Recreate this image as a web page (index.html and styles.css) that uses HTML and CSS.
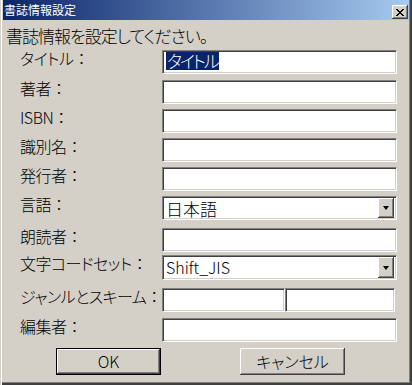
FILE: index.html
```html
<!DOCTYPE html>
<html lang="ja">
<head>
<meta charset="utf-8">
<title>書誌情報設定</title>
<link rel="stylesheet" href="styles.css">
</head>
<body>
<div class="window">
  <div class="titlebar">
    <span class="title">書誌情報設定</span>
    <span class="close"><svg width="8" height="7" viewBox="0 0 8 7" shape-rendering="crispEdges"><path d="M0 0h2v1h1v1h2v-1h1v-1h2v1h-1v1h-1v1h-1v1h1v1h1v1h1v1h-2v-1h-1v-1h-2v1h-1v1h-2v-1h1v-1h1v-1h1v-1h-1v-1h-1v-1h-1z" fill="#000"/></svg></span>
  </div>
  <div class="content">
    <p class="prompt">書誌情報を設定してください。</p>
    <div class="form">
      <div class="row"><span class="label">タイトル<span class="colon">：</span></span><div class="field"><span class="selected">タイトル</span></div></div>
      <div class="row gap6"><span class="label">著者<span class="colon">：</span></span><div class="field"></div></div>
      <div class="row"><span class="label">ISBN<span class="colon">：</span></span><div class="field"></div></div>
      <div class="row"><span class="label">識別名<span class="colon">：</span></span><div class="field"></div></div>
      <div class="row"><span class="label">発行者<span class="colon">：</span></span><div class="field"></div></div>
      <div class="row"><span class="label">言語<span class="colon">：</span></span><div class="field select"><span class="value">日本語</span><span class="dd"><i class="arrow"></i></span></div></div>
      <div class="row gap8"><span class="label">朗読者<span class="colon">：</span></span><div class="field"></div></div>
      <div class="row gap3 tall"><span class="label">文字コードセット<span class="colon">：</span></span><div class="field select"><span class="value latin">Shift_JIS</span><span class="dd"><i class="arrow"></i></span></div></div>
      <div class="row gap8"><span class="label">ジャンルとスキーム<span class="colon">：</span></span><div class="split"><div class="field genre"></div><div class="field scheme"></div></div></div>
      <div class="row gap6"><span class="label">編集者<span class="colon">：</span></span><div class="field"></div></div>
    </div>
    <div class="buttons">
      <button class="btn default">OK</button>
      <button class="btn">キャンセル</button>
    </div>
  </div>
</div>
</body>
</html>
```

FILE: styles.css
```css
* {
  box-sizing: border-box;
}

html,
body {
  margin: 0;
  padding: 0;
  background: #d4d0c8;
}

body {
  font-family: "Noto Sans CJK JP", "Noto Sans", sans-serif;
  font-weight: 300;
  color: #000;
}

.window {
  width: 412px;
  height: 385px;
  background: #d4d0c8;
  padding: 0 3px 3px 3px;
  display: flex;
  flex-direction: column;
  box-shadow:
    inset 1px 0 #d4d0c8,
    inset 2px 0 #ffffff,
    inset -2px -2px #404040,
    inset -3px -3px #808080;
}

.titlebar {
  height: 20px;
  flex: none;
  background: linear-gradient(to right, #0a246a, #a6caf0);
  display: flex;
  align-items: flex-start;
  justify-content: space-between;
  padding: 0 1px 0 1px;
}

.title {
  color: #fff;
  font-size: 12px;
  font-weight: 400;
  line-height: 20px;
  font-feature-settings: "palt";
}

.close {
  width: 16px;
  height: 14px;
  margin-top: 5px;
  background: #d4d0c8;
  display: flex;
  align-items: center;
  justify-content: center;
  box-shadow:
    inset -1px -1px #404040,
    inset 1px 1px #ffffff,
    inset -2px -2px #808080;
}

.close svg {
  display: block;
}

.content {
  flex: 1;
  display: flex;
  flex-direction: column;
  padding-left: 3px;
}

.prompt {
  margin: 4px 0 0 0;
  font-size: 17px;
  line-height: 24px;
  letter-spacing: -1px;
  font-feature-settings: "palt";
}

.form {
  margin-top: 2px;
  padding-left: 14px;
  display: flex;
  flex-direction: column;
}

.row {
  display: flex;
  align-items: flex-start;
  height: 24px;
  margin-top: 5px;
}

.row:first-child {
  margin-top: 0;
}

.row.gap6 {
  margin-top: 6px;
}

.row.gap8 {
  margin-top: 8px;
}

.row.gap3 {
  margin-top: 3px;
}

.row.tall {
  height: 25px;
}

.label {
  width: 142px;
  flex: none;
  font-size: 16px;
  line-height: 14px;
  padding-top: 1px;
  letter-spacing: -0.5px;
  white-space: nowrap;
  font-feature-settings: "palt";
}

.colon {
  font-feature-settings: normal;
  letter-spacing: 0;
}

.field {
  width: 235px;
  height: 100%;
  background: #fff;
  border: 1px solid;
  border-color: #808080 #ffffff #ffffff #808080;
  box-shadow:
    inset 1px 1px #404040,
    inset -1px -1px #d4d0c8;
  padding: 1px 1px 1px 3px;
  display: flex;
  align-items: flex-start;
  font-size: 17px;
  line-height: 20px;
  font-feature-settings: "palt";
}

.selected {
  background: #0a246a;
  color: #fff;
  line-height: 18px;
  padding: 0 1px;
  letter-spacing: -2px;
}

.select {
  padding-right: 2px;
}

.select .value {
  flex: 1;
  line-height: 21px;
}

.select .value.latin {
  font-size: 16px;
}

.dd {
  width: 16px;
  height: 100%;
  flex: none;
  background: #d4d0c8;
  display: flex;
  align-items: center;
  justify-content: center;
  box-shadow:
    inset -1px -1px #404040,
    inset 1px 1px #ffffff,
    inset -2px -2px #808080;
}

.arrow {
  width: 0;
  height: 0;
  border-left: 3.5px solid transparent;
  border-right: 3.5px solid transparent;
  border-top: 4px solid #000;
}

.split {
  display: flex;
  height: 100%;
}

.field.genre {
  width: 123px;
}

.field.scheme {
  width: 110px;
}

.buttons {
  display: flex;
  gap: 79px;
  padding-left: 50px;
  margin-top: 6px;
}

.btn {
  width: 105px;
  height: 27px;
  background: #d4d0c8;
  border: none;
  padding: 0 0 2px 0;
  font-family: "Noto Sans CJK JP", "Noto Sans", sans-serif;
  font-weight: 300;
  font-size: 16px;
  line-height: 20px;
  color: #000;
  font-feature-settings: "palt";
  box-shadow:
    inset -1px -1px #404040,
    inset 1px 1px #ffffff,
    inset -2px -2px #808080;
}

.btn.default {
  border: 1px solid #000;
}
```
